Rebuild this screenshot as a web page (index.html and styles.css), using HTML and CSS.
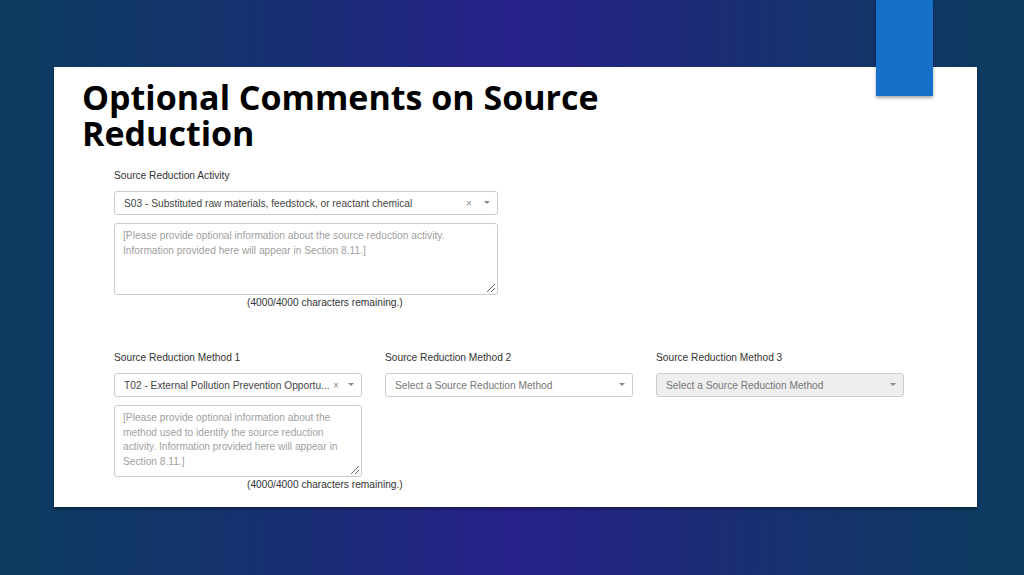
FILE: index.html
```html
<!DOCTYPE html>
<html>
<head>
<meta charset="utf-8">
<link rel="stylesheet" href="styles.css">
</head>
<body>
<div class="slide">
  <div class="tab"></div>
  <div class="panel">
    <h1 class="title">Optional Comments on Source<br>Reduction</h1>
    <div class="form">
      <div class="field wide">
        <div class="label">Source Reduction Activity</div>
        <div class="select">
          <span class="value">S03 - Substituted raw materials, feedstock, or reactant chemical</span>
          <span class="clear">×</span>
          <span class="caret"></span>
        </div>
        <div class="textarea">[Please provide optional information about the source reduction activity. Information provided here will appear in Section 8.11.]<span class="grip"></span></div>
        <div class="remaining">(4000/4000 characters remaining.)</div>
      </div>
      <div class="row">
        <div class="field col">
          <div class="label">Source Reduction Method 1</div>
          <div class="select">
            <span class="value">T02 - External Pollution Prevention Opportu...</span>
            <span class="clear">×</span>
            <span class="caret"></span>
          </div>
          <div class="textarea">[Please provide optional information about the method used to identify the source reduction activity. Information provided here will appear in Section 8.11.]<span class="grip"></span></div>
          <div class="remaining">(4000/4000 characters remaining.)</div>
        </div>
        <div class="field col">
          <div class="label">Source Reduction Method 2</div>
          <div class="select">
            <span class="value placeholder">Select a Source Reduction Method</span>
            <span class="caret"></span>
          </div>
        </div>
        <div class="field col">
          <div class="label">Source Reduction Method 3</div>
          <div class="select disabled">
            <span class="value placeholder">Select a Source Reduction Method</span>
            <span class="caret"></span>
          </div>
        </div>
      </div>
    </div>
  </div>
</div>
</body>
</html>
```
FILE: styles.css
```css
html, body {
  margin: 0;
  padding: 0;
}
body {
  width: 1024px;
  height: 575px;
  overflow: hidden;
  background: linear-gradient(90deg, #0b3c5f 0%, #173170 25%, #27218a 50%, #193070 75%, #0b3c5e 100%);
}
.slide {
  position: relative;
  width: 1024px;
  height: 575px;
  padding: 67px 0 0 54px;
  box-sizing: border-box;
}
.tab {
  position: absolute;
  left: 876px;
  top: 0;
  width: 57px;
  height: 96px;
  background: #1570c9;
  box-shadow: 0 2px 3px rgba(0, 0, 0, 0.35);
  z-index: 2;
}
.panel {
  width: 923px;
  height: 440px;
  background: #ffffff;
  box-sizing: border-box;
  padding: 12px 0 0 28px;
  box-shadow: 0 2px 3px rgba(0, 0, 0, 0.35);
}
.title {
  margin: 0;
  font-family: "Open Sans", "Noto Sans", sans-serif;
  font-weight: 700;
  font-size: 34px;
  line-height: 36px;
  color: #000;
}
.form {
  margin-left: 32px;
  margin-top: 18px;
  font-family: "Liberation Sans", Arial, sans-serif;
  font-size: 10.2px;
  color: #444;
}
.field.wide {
  width: 384px;
}
.label {
  color: #333;
  line-height: 14px;
  margin-bottom: 8px;
  white-space: nowrap;
}
.select {
  position: relative;
  height: 24px;
  border: 1px solid #ccc;
  border-radius: 3px;
  box-sizing: border-box;
  display: flex;
  align-items: center;
  padding: 0 0 0 9px;
  background: #fff;
}
.select.disabled {
  background: #eee;
}
.value {
  flex: 1;
  min-width: 0;
  white-space: nowrap;
  color: #444;
}
.value.placeholder {
  color: #777;
}
.clear {
  color: #888;
  font-size: 10px;
  width: 10px;
  text-align: center;
}
.wide .clear {
  margin-right: 3px;
}
.caret {
  width: 20px;
  height: 10px;
  position: relative;
}
.caret::after {
  content: "";
  position: absolute;
  left: 7px;
  top: 3px;
  border-left: 3px solid transparent;
  border-right: 3px solid transparent;
  border-top: 3px solid #888;
}
.textarea {
  position: relative;
  margin-top: 8px;
  height: 72px;
  border: 1px solid #ccc;
  border-radius: 3px;
  box-sizing: border-box;
  padding: 5px 8px;
  color: #a0a0a0;
  line-height: 14.6px;
}
.grip {
  position: absolute;
  right: 2px;
  bottom: 2px;
  width: 8px;
  height: 8px;
  background: linear-gradient(135deg, transparent 45%, #666 45%, #666 55%, transparent 55%, transparent 70%, #666 70%, #666 80%, transparent 80%);
}
.remaining {
  margin-left: 133px;
  margin-top: 1px;
  color: #333;
  line-height: 14px;
  white-space: nowrap;
}
.row {
  display: flex;
  gap: 23px;
  margin-top: 41px;
}
.col {
  width: 248px;
}
```
